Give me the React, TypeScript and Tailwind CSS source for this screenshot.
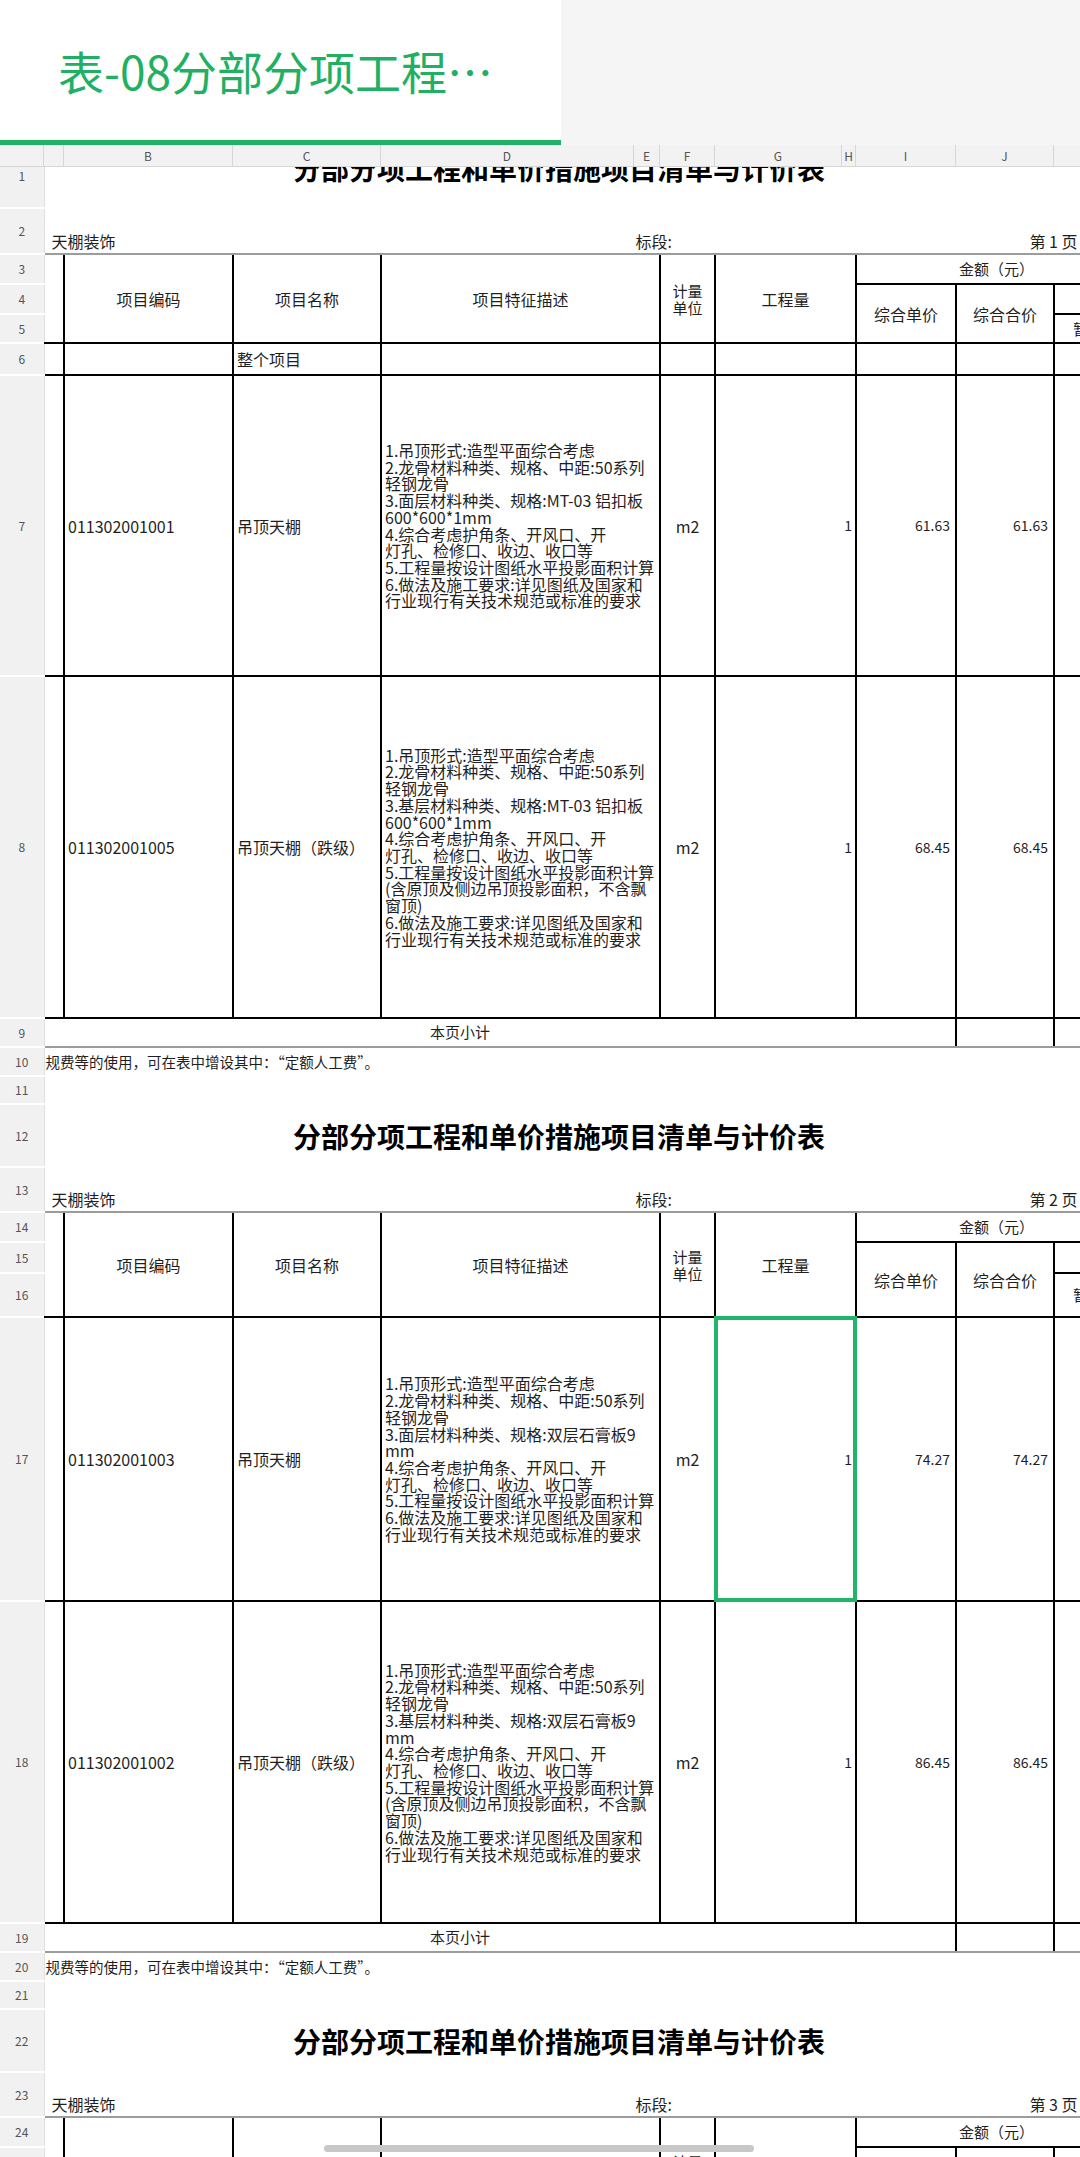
import React from "react";

type Item = {
  n: number;
  h: string;
  code: string;
  name: string;
  price: string;
  desc: string[];
  selected?: boolean;
};

const vl = "border-l-2 border-l-black";
const bb = "border-b-2 border-b-black";
const gb = "border-b-2 border-b-[#9c9c9c]";
const th = "p-0 align-middle text-center";

const descA = (layer: string, mat: string[]) => [
  "1.吊顶形式:造型平面综合考虑",
  "2.龙骨材料种类、规格、中距:50系列",
  "轻钢龙骨",
  `3.${layer}材料种类、规格:${mat[0]}`,
  mat[1],
  "4.综合考虑护角条、开风口、开",
  "灯孔、检修口、收边、收口等",
  "5.工程量按设计图纸水平投影面积计算",
];

const tail = ["6.做法及施工要求:详见图纸及国家和", "行业现行有关技术规范或标准的要求"];
const extra = ["(含原顶及侧边吊顶投影面积，不含飘", "窗顶)"];

const page1: Item[] = [
  {
    n: 7,
    h: "h-[301px]",
    code: "011302001001",
    name: "吊顶天棚",
    price: "61.63",
    desc: [...descA("面层", ["MT-03 铝扣板", "600*600*1mm"]), ...tail],
  },
  {
    n: 8,
    h: "h-[342px]",
    code: "011302001005",
    name: "吊顶天棚（跌级）",
    price: "68.45",
    desc: [...descA("基层", ["MT-03 铝扣板", "600*600*1mm"]), ...extra, ...tail],
  },
];

const page2: Item[] = [
  {
    n: 17,
    h: "h-[284px]",
    code: "011302001003",
    name: "吊顶天棚",
    price: "74.27",
    desc: [...descA("面层", ["双层石膏板9", "mm"]), ...tail],
    selected: true,
  },
  {
    n: 18,
    h: "h-[322px]",
    code: "011302001002",
    name: "吊顶天棚（跌级）",
    price: "86.45",
    desc: [...descA("基层", ["双层石膏板9", "mm"]), ...extra, ...tail],
  },
];

function Num({ n }: { n: number }) {
  return (
    <td className="p-0 align-middle bg-[#f1f1f1] border-b-2 border-b-white border-r border-r-[#e0e0e0] text-center text-[12px] text-[#555]">
      {n}
    </td>
  );
}

function TitleRow({ n, first }: { n: number; first?: boolean }) {
  return (
    <tr className="h-[63px]">
      <Num n={n} />
      <td />
      <td
        colSpan={9}
        className={`p-0 align-middle text-center text-[28px] font-bold text-black whitespace-nowrap ${
          first ? "pb-[18px]" : ""
        }`}
      >
        分部分项工程和单价措施项目清单与计价表
      </td>
      <td />
    </tr>
  );
}

function InfoRow({ n, page, h }: { n: number; page: number; h: string }) {
  return (
    <tr className={h}>
      <Num n={n} />
      <td colSpan={11} className={`p-0 align-bottom ${gb}`}>
        <div className="flex whitespace-nowrap pl-[7px] pb-[2px] text-[16px] leading-[20px]">
          <span className="w-[584px] shrink-0">天棚装饰</span>
          <span className="w-[394px] shrink-0">标段:</span>
          <span>第 {page} 页 共 3 页</span>
        </div>
      </td>
    </tr>
  );
}

function HeadRows({ start, hs }: { start: number; hs: [string, string, string] }) {
  return (
    <>
      <tr className={hs[0]}>
        <Num n={start} />
        <td rowSpan={3} className={`p-0 ${bb}`} />
        <td rowSpan={3} className={`${th} ${vl} ${bb} text-[16px]`}>项目编码</td>
        <td rowSpan={3} className={`${th} ${vl} ${bb} text-[16px]`}>项目名称</td>
        <td rowSpan={3} colSpan={2} className={`${th} ${vl} ${bb} text-[16px]`}>项目特征描述</td>
        <td rowSpan={3} className={`${th} ${vl} ${bb} text-[15px] leading-[17px]`}>
          计量
          <br />
          单位
        </td>
        <td rowSpan={3} colSpan={2} className={`${th} ${vl} ${bb} text-[16px]`}>工程量</td>
        <td colSpan={3} className={`${th} ${vl} ${bb} text-[15px] leading-[20px]`}>金额（元）</td>
      </tr>
      <tr className={hs[1]}>
        <Num n={start + 1} />
        <td rowSpan={2} className={`${th} ${vl} ${bb} text-[16px]`}>综合单价</td>
        <td rowSpan={2} className={`${th} ${vl} ${bb} text-[16px]`}>综合合价</td>
        <td className={`${th} ${vl} ${bb} text-[15px] leading-[20px]`}>其中</td>
      </tr>
      <tr className={hs[2]}>
        <Num n={start + 2} />
        <td className={`${th} ${vl} ${bb} text-[15px] leading-[20px]`}>暂估价</td>
      </tr>
    </>
  );
}

function DataRow({ it }: { it: Item }) {
  return (
    <tr className={it.h}>
      <Num n={it.n} />
      <td className={`p-0 ${bb}`} />
      <td className={`p-0 pl-[3px] align-middle ${vl} ${bb}`}>{it.code}</td>
      <td className={`p-0 pl-[3px] align-middle whitespace-nowrap ${vl} ${bb}`}>{it.name}</td>
      <td colSpan={2} className={`p-0 pl-[3px] align-middle ${vl} ${bb}`}>
        {it.desc.map((l, i) => (
          <div key={i} className="whitespace-nowrap leading-[16.7px]">
            {l}
          </div>
        ))}
      </td>
      <td className={`p-0 align-middle text-center ${vl} ${bb}`}>m2</td>
      <td colSpan={2} className={`relative p-0 pr-[3px] align-middle text-right text-[14px] ${vl} ${bb}`}>
        1
        {it.selected && (
          <div className="absolute -left-[2px] -top-[2px] -right-[2px] -bottom-[2px] border-4 border-[#22b46a]" />
        )}
      </td>
      <td className={`p-0 pr-[5px] align-middle text-right text-[14px] ${vl} ${bb}`}>{it.price}</td>
      <td className={`p-0 pr-[5px] align-middle text-right text-[14px] ${vl} ${bb}`}>{it.price}</td>
      <td className={`p-0 ${vl} ${bb}`} />
    </tr>
  );
}

function SubRow({ n }: { n: number }) {
  return (
    <tr className="h-[29px]">
      <Num n={n} />
      <td className={`p-0 ${gb}`} />
      <td colSpan={7} className={`p-0 align-middle text-center text-[15px] ${gb}`}>本页小计</td>
      <td className={`p-0 ${gb}`} />
      <td className={`p-0 ${vl} ${gb}`} />
      <td className={`p-0 ${vl} ${gb}`} />
    </tr>
  );
}

function NoteRow({ n }: { n: number }) {
  return (
    <tr className="h-[29px]">
      <Num n={n} />
      <td colSpan={11} className="p-0 pl-[1px] align-middle text-[14.5px] whitespace-nowrap">
        规费等的使用，可在表中增设其中：“定额人工费”。
      </td>
    </tr>
  );
}

function EmptyRow({ n }: { n: number }) {
  return (
    <tr className="h-[28px]">
      <Num n={n} />
      <td colSpan={11} />
    </tr>
  );
}

const cols = [
  { l: "", w: "w-[44px]" },
  { l: "", w: "w-[20px]" },
  { l: "B", w: "w-[169px]" },
  { l: "C", w: "w-[148px]" },
  { l: "D", w: "w-[253px]" },
  { l: "E", w: "w-[26px]" },
  { l: "F", w: "w-[55px]" },
  { l: "G", w: "w-[127px]" },
  { l: "H", w: "w-[14px]" },
  { l: "I", w: "w-[100px]" },
  { l: "J", w: "w-[98px]" },
  { l: "K", w: "w-[82px]" },
];

export default function App() {
  return (
    <div className="relative w-[1080px] h-[2157px] overflow-hidden bg-white font-['Noto_Sans_CJK_SC',sans-serif] text-[#1f1f1f]">
      <div className="flex h-[145px] bg-[#f5f5f5]">
        <div className="flex w-[561px] items-center bg-white border-b-[5px] border-b-[#20b26b] pl-[58px] text-[46px] text-[#1fb063] whitespace-nowrap">
          表-08分部分项工程…
        </div>
        <div className="flex-1" />
      </div>
      <div className="flex h-[22px] w-[1136px] bg-[#f2f2f2] border-b border-b-[#d6d6d6]">
        {cols.map((c, i) => (
          <div
            key={i}
            className={`${c.w} shrink-0 flex items-center justify-center border-r border-r-[#d6d6d6] text-[12px] text-[#555]`}
          >
            {c.l}
          </div>
        ))}
      </div>
      <div className="h-[1990px] overflow-hidden">
        <table className="-mt-[22px] w-[1136px] table-fixed border-collapse text-[16px]">
          <colgroup>
            {cols.map((c, i) => (
              <col key={i} className={c.w} />
            ))}
          </colgroup>
          <tbody>
            <TitleRow n={1} first />
            <InfoRow n={2} page={1} h="h-[46px]" />
            <HeadRows start={3} hs={["h-[30px]", "h-[30px]", "h-[29px]"]} />
            <tr className="h-[32px]">
              <Num n={6} />
              <td className={`p-0 ${bb}`} />
              <td className={`p-0 ${vl} ${bb}`} />
              <td className={`p-0 pl-[3px] align-middle ${vl} ${bb}`}>整个项目</td>
              <td colSpan={2} className={`p-0 ${vl} ${bb}`} />
              <td className={`p-0 ${vl} ${bb}`} />
              <td colSpan={2} className={`p-0 ${vl} ${bb}`} />
              <td className={`p-0 ${vl} ${bb}`} />
              <td className={`p-0 ${vl} ${bb}`} />
              <td className={`p-0 ${vl} ${bb}`} />
            </tr>
            {page1.map((it) => (
              <DataRow key={it.n} it={it} />
            ))}
            <SubRow n={9} />
            <NoteRow n={10} />
            <EmptyRow n={11} />
            <TitleRow n={12} />
            <InfoRow n={13} page={2} h="h-[45px]" />
            <HeadRows start={14} hs={["h-[30px]", "h-[31px]", "h-[44px]"]} />
            {page2.map((it) => (
              <DataRow key={it.n} it={it} />
            ))}
            <SubRow n={19} />
            <NoteRow n={20} />
            <EmptyRow n={21} />
            <TitleRow n={22} />
            <InfoRow n={23} page={3} h="h-[45px]" />
            <HeadRows start={24} hs={["h-[30px]", "h-[31px]", "h-[44px]"]} />
          </tbody>
        </table>
      </div>
      <div className="absolute left-[324px] top-[2145px] h-[7px] w-[430px] rounded-full bg-[#c8c8c8]" />
    </div>
  );
}
